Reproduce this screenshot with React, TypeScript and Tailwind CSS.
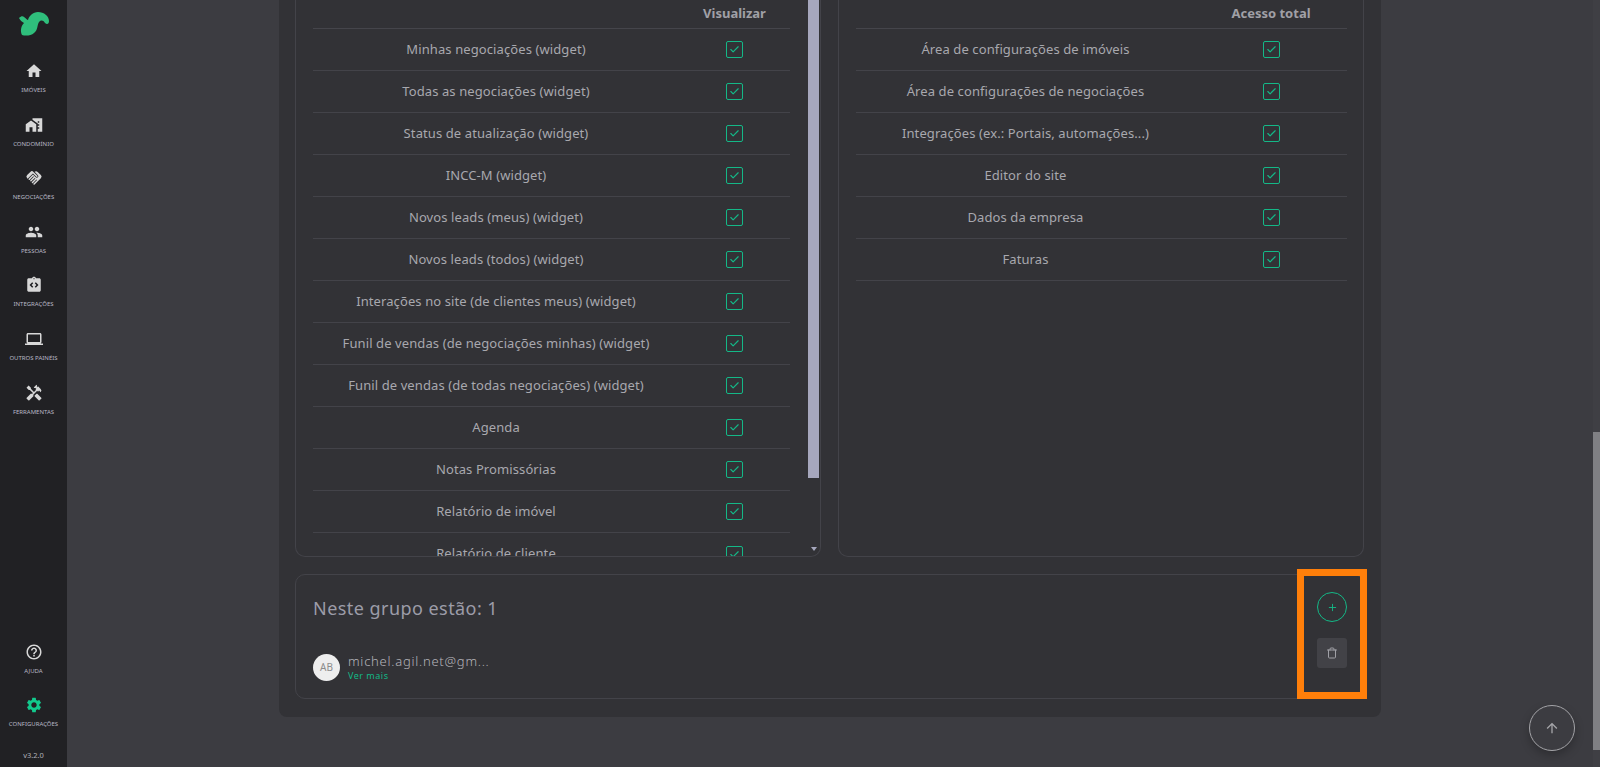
import { MdHome, MdHomeWork, MdHandshake, MdPeople, MdIntegrationInstructions, MdLaptop, MdHandyman, MdHelpOutline, MdSettings, MdArrowUpward } from 'react-icons/md'
import { Check, Plus, Trash } from 'lucide-react'

const navTop = [
  { label: 'IMÓVEIS', icon: MdHome },
  { label: 'CONDOMÍNIO', icon: MdHomeWork },
  { label: 'NEGOCIAÇÕES', icon: MdHandshake },
  { label: 'PESSOAS', icon: MdPeople },
  { label: 'INTEGRAÇÕES', icon: MdIntegrationInstructions },
  { label: 'OUTROS PAINÉIS', icon: MdLaptop },
  { label: 'FERRAMENTAS', icon: MdHandyman },
]

const leftRows = [
  'Minhas negociações (widget)',
  'Todas as negociações (widget)',
  'Status de atualização (widget)',
  'INCC-M (widget)',
  'Novos leads (meus) (widget)',
  'Novos leads (todos) (widget)',
  'Interações no site (de clientes meus) (widget)',
  'Funil de vendas (de negociações minhas) (widget)',
  'Funil de vendas (de todas negociações) (widget)',
  'Agenda',
  'Notas Promissórias',
  'Relatório de imóvel',
  'Relatório de cliente',
]

const rightRows = [
  'Área de configurações de imóveis',
  'Área de configurações de negociações',
  'Integrações (ex.: Portais, automações...)',
  'Editor do site',
  'Dados da empresa',
  'Faturas',
]

function Box() {
  return (
    <div className="flex h-[17px] w-[17px] items-center justify-center rounded-[2px] border border-[#14b887]">
      <Check size={11} strokeWidth={2.5} className="text-[#14b887]" />
    </div>
  )
}

function Table({ rows, head, labelW, width }: { rows: string[]; head: string; labelW: string; width: string }) {
  return (
    <div className={width}>
      <div className="flex h-[29px] border-b border-[#45454b]">
        <div className={labelW} />
        <div className="flex-1 pb-[3px] text-center font-['Open_Sans',sans-serif] text-[13px] leading-[26px] font-bold text-[#a0a0a6]">{head}</div>
      </div>
      {rows.map((r, i) => (
        <div key={r} className={'flex h-[42px] items-center ' + (i < rows.length - 1 || rows.length < 10 ? 'border-b border-[#434349]' : '')}>
          <div className={labelW + ' text-center text-[13px] tracking-[0.1px] text-[#a8a8ae]'}>{r}</div>
          <div className="flex flex-1 justify-center">
            <Box />
          </div>
        </div>
      ))}
    </div>
  )
}

function NavItem({ label, icon: Icon, active }: { label: string; icon: typeof MdHome; active?: boolean }) {
  return (
    <div className="flex h-[53.6px] flex-col items-center">
      <Icon size={18} className={active ? 'text-[#12c98c]' : 'text-[#d8d8d8]'} />
      <span className="mt-[5px] font-['Inter',sans-serif] text-[6px] leading-[10px] whitespace-nowrap text-[#b8b8c4]">{label}</span>
    </div>
  )
}

export default function App() {
  return (
    <div className="relative flex h-[767px] w-[1600px] overflow-hidden bg-[#3c3c41] font-['Roboto',sans-serif]">
      <aside className="flex h-full w-[67px] shrink-0 flex-col bg-[#212124]">
        <div className="flex h-[62px] justify-center pt-[11px]">
          <svg width="32" height="26" viewBox="0 0 32 26" className="text-[#2fbf7c]">
            <path
              fill="currentColor"
              d="M1 7 C3 5 5 5 6 6 C8 7 9 9 10 9 C11 5 15 1 20 1 C26 1 31 5 31 10 C31 13 29 14 27 12 C25 9 23 9 21 11 C19 14 20 19 16 22 C13 25 7 25 4 24 C2 20 3 15 6 12 C4 11 2 9 1 7 Z"
            />
          </svg>
        </div>
        {navTop.map(n => (
          <NavItem key={n.label} label={n.label} icon={n.icon} />
        ))}
        <div className="flex-1" />
        <NavItem label="AJUDA" icon={MdHelpOutline} />
        <NavItem label="CONFIGURAÇÕES" icon={MdSettings} active />
        <div className="flex h-[17px] justify-center pb-[6px] text-[7.5px] leading-[10px] text-[#b0b0b8]">v3.2.0</div>
      </aside>

      <main className="flex flex-1 justify-center">
        <div className="flex h-[717px] w-[1102px] flex-col gap-[17px] rounded-b-[8px] bg-[#323236] pr-[17px] pb-[18px] pl-[16px]">
          <div className="flex h-[557px] gap-[17px]">
            <div className="flex h-full w-[526px] overflow-hidden rounded-b-[10px] border-x border-b border-[#434349] pl-[17px]">
              <Table rows={leftRows} head="Visualizar" labelW="w-[366px]" width="w-[477px] shrink-0" />
              <div className="ml-[18px] flex h-full w-[11px] flex-col items-center">
                <div className="h-[478px] w-full bg-[#a6a7bd]" />
                <div className="flex-1" />
                <div className="mb-[5px] h-0 w-0 border-x-[3.5px] border-t-[4px] border-x-transparent border-t-[#a6a7bd]" />
              </div>
            </div>
            <div className="h-full w-[526px] rounded-b-[10px] border-x border-b border-[#434349] pl-[17px]">
              <Table rows={rightRows} head="Acesso total" labelW="w-[339px]" width="w-[491px]" />
            </div>
          </div>

          <div className="relative flex h-[125px] rounded-[10px] border border-[#434349] pr-[16px] pl-[17px]">
            <div className="flex-1">
              <div className="mt-[20px] text-[18px] leading-[26px] tracking-[0.45px] text-[#9c9ca8]">Neste grupo estão: 1</div>
              <div className="mt-[32px] flex items-center gap-[8px]">
                <div className="flex h-[27px] w-[27px] items-center justify-center rounded-full bg-[#eeeeee] text-[10px] text-[#8c8c8c]">AB</div>
                <div>
                  <div className="text-[13px] leading-[16px] font-light tracking-[0.75px] text-[#b4b4ba]">michel.agil.net@gm...</div>
                  <div className="mt-[1px] text-[9px] leading-[12px] tracking-[0.5px] text-[#12b886]">Ver mais</div>
                </div>
              </div>
            </div>
            <div className="flex w-[30px] flex-col items-center">
              <div className="mt-[17px] flex h-[30px] w-[30px] items-center justify-center rounded-full border border-[#14b887]">
                <Plus size={11} className="text-[#14b887]" />
              </div>
              <div className="mt-[16px] flex h-[30px] w-[30px] items-center justify-center rounded-[3px] bg-[#424247]">
                <Trash size={12} className="text-[#a0a0a6]" />
              </div>
            </div>
            <div className="absolute top-[-6px] left-[1001px] h-[130px] w-[70px] border-[7px] border-[#ff7f0a]" />
          </div>
        </div>
      </main>

      <div className="flex h-full w-[7px] shrink-0 flex-col bg-[#3f3f44]">
        <div className="mt-[432px] h-[318px] w-full bg-[#808084]" />
      </div>

      <div className="absolute top-[705px] left-[1529px] flex h-[46px] w-[46px] items-center justify-center rounded-full border border-[#a4a4a8] bg-[#3c3c41] shadow-[0_4px_10px_rgba(0,0,0,0.25)]">
        <MdArrowUpward size={16} className="text-[#a4a4a8]" />
      </div>
    </div>
  )
}
